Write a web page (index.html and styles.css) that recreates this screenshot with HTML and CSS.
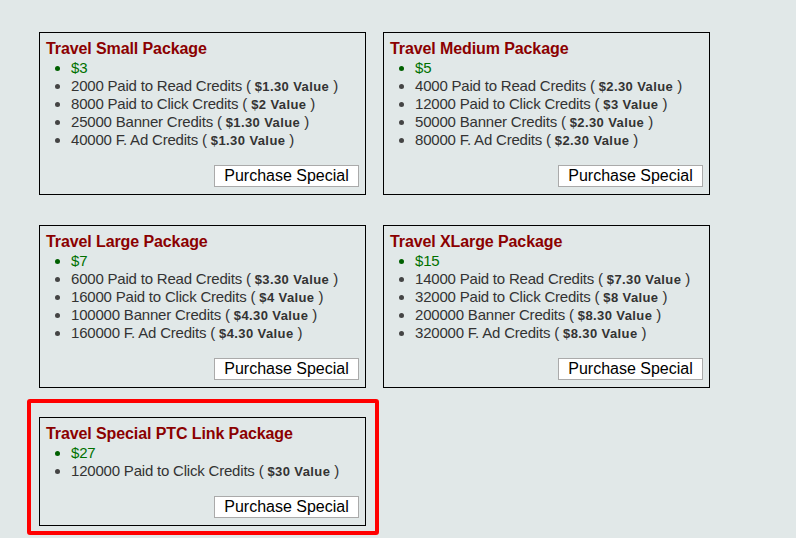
FILE: index.html
```html
<!DOCTYPE html>
<html>
<head>
<meta charset="utf-8">
<link rel="stylesheet" href="styles.css">
</head>
<body>
<div class="page">
  <div class="grid">
    <div class="box">
      <div class="title">Travel Small Package</div>
      <ul class="items">
        <li class="price">$3</li>
        <li>2000 Paid to Read Credits ( <b>$1.30 Value</b> )</li>
        <li>8000 Paid to Click Credits ( <b>$2 Value</b> )</li>
        <li>25000 Banner Credits ( <b>$1.30 Value</b> )</li>
        <li>40000 F. Ad Credits ( <b>$1.30 Value</b> )</li>
      </ul>
      <div class="actions"><button class="buy">Purchase Special</button></div>
    </div>
    <div class="box">
      <div class="title">Travel Medium Package</div>
      <ul class="items">
        <li class="price">$5</li>
        <li>4000 Paid to Read Credits ( <b>$2.30 Value</b> )</li>
        <li>12000 Paid to Click Credits ( <b>$3 Value</b> )</li>
        <li>50000 Banner Credits ( <b>$2.30 Value</b> )</li>
        <li>80000 F. Ad Credits ( <b>$2.30 Value</b> )</li>
      </ul>
      <div class="actions"><button class="buy">Purchase Special</button></div>
    </div>
    <div class="box">
      <div class="title">Travel Large Package</div>
      <ul class="items">
        <li class="price">$7</li>
        <li>6000 Paid to Read Credits ( <b>$3.30 Value</b> )</li>
        <li>16000 Paid to Click Credits ( <b>$4 Value</b> )</li>
        <li>100000 Banner Credits ( <b>$4.30 Value</b> )</li>
        <li>160000 F. Ad Credits ( <b>$4.30 Value</b> )</li>
      </ul>
      <div class="actions"><button class="buy">Purchase Special</button></div>
    </div>
    <div class="box">
      <div class="title">Travel XLarge Package</div>
      <ul class="items">
        <li class="price">$15</li>
        <li>14000 Paid to Read Credits ( <b>$7.30 Value</b> )</li>
        <li>32000 Paid to Click Credits ( <b>$8 Value</b> )</li>
        <li>200000 Banner Credits ( <b>$8.30 Value</b> )</li>
        <li>320000 F. Ad Credits ( <b>$8.30 Value</b> )</li>
      </ul>
      <div class="actions"><button class="buy">Purchase Special</button></div>
    </div>
    <div class="box special">
      <div class="title">Travel Special PTC Link Package</div>
      <ul class="items">
        <li class="price">$27</li>
        <li>120000 Paid to Click Credits ( <b>$30 Value</b> )</li>
      </ul>
      <div class="actions"><button class="buy">Purchase Special</button></div>
      <div class="highlight"></div>
    </div>
  </div>
</div>
</body>
</html>
```

FILE: styles.css
```css
html, body {
  margin: 0;
  padding: 0;
  background: #e1e8e8;
}
.page {
  box-sizing: border-box;
  min-height: 538px;
  padding: 32px 0 0 39px;
  font-family: "Liberation Sans", Arial, sans-serif;
  color: #333;
}
.grid {
  display: grid;
  grid-template-columns: 327px 327px;
  column-gap: 17px;
  row-gap: 30px;
  align-items: start;
}
.box {
  position: relative;
  box-sizing: border-box;
  height: 163px;
  border: 1px solid #000;
  padding: 7px 6px 7px 6px;
  display: flex;
  flex-direction: column;
}
.box.special {
  height: 109px;
  margin-top: -1px;
}
.title {
  color: #8b0000;
  font-weight: bold;
  font-size: 16px;
  line-height: 18px;
  letter-spacing: -0.1px;
  white-space: nowrap;
  margin-bottom: 1px;
}
.items {
  margin: 0;
  padding: 0 0 0 25px;
  font-size: 15px;
  line-height: 18px;
  letter-spacing: -0.2px;
}
.items li {
  white-space: nowrap;
  height: 18px;
}
.items li::marker {
  color: #444;
}
.items b {
  font-size: 13px;
  line-height: 12px;
  letter-spacing: 0.4px;
}
.items .price {
  color: #007000;
}
.items .price::marker {
  color: #006000;
}
.actions {
  margin-top: auto;
  display: flex;
  justify-content: flex-end;
}
.buy {
  box-sizing: border-box;
  width: 145px;
  height: 22px;
  background: #fff;
  border: 1px solid #aaa;
  padding: 0;
  font-family: "Liberation Sans", Arial, sans-serif;
  font-size: 16px;
  line-height: 20px;
  color: #000;
}
.highlight {
  position: absolute;
  left: -13px;
  top: -19px;
  right: -14px;
  bottom: -10px;
  border: 4px solid #ff0000;
  border-radius: 3px;
  pointer-events: none;
}
```
